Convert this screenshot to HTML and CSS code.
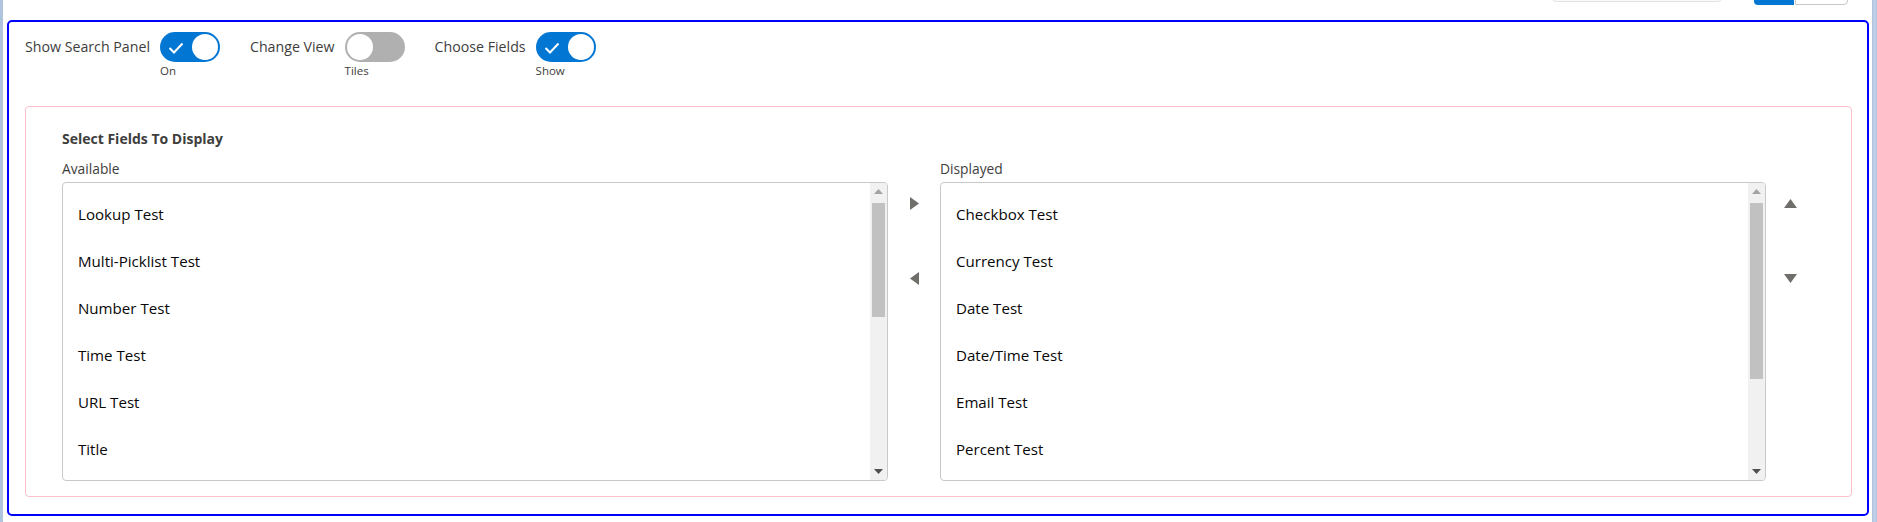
FILE: index.html
```html
<!DOCTYPE html>
<html lang="en">
<head>
<meta charset="utf-8">
<title>Field chooser</title>
<link rel="stylesheet" href="styles.css">
</head>
<body>
<div class="page">
  <div class="edge edge-left"></div>
  <div class="main">
    <div class="topbar">
      <div class="search-stub"></div>
      <div class="btn-group">
        <div class="btn btn-brand"></div>
        <div class="btn btn-neutral"></div>
      </div>
    </div>
    <div class="card">
      <div class="toggles">
        <div class="toggle-item">
          <span class="toggle-label">Show Search Panel</span>
          <div class="toggle-col">
            <span class="switch on">
              <svg class="check" width="16" height="12" viewBox="0 0 16 12"><polyline points="1.5,6 6,10.5 14.5,1.5" fill="none" stroke="#fff" stroke-width="2"/></svg>
              <span class="knob"></span>
            </span>
            <span class="status">On</span>
          </div>
        </div>
        <div class="toggle-item">
          <span class="toggle-label">Change View</span>
          <div class="toggle-col">
            <span class="switch off"><span class="knob"></span></span>
            <span class="status">Tiles</span>
          </div>
        </div>
        <div class="toggle-item">
          <span class="toggle-label">Choose Fields</span>
          <div class="toggle-col">
            <span class="switch on">
              <svg class="check" width="16" height="12" viewBox="0 0 16 12"><polyline points="1.5,6 6,10.5 14.5,1.5" fill="none" stroke="#fff" stroke-width="2"/></svg>
              <span class="knob"></span>
            </span>
            <span class="status">Show</span>
          </div>
        </div>
      </div>

      <div class="picker">
        <div class="picker-title">Select Fields To Display</div>
        <div class="picker-grid">
          <div class="col">
            <div class="col-label">Available</div>
            <div class="listbox">
              <ul class="options">
                <li>Lookup Test</li>
                <li>Multi-Picklist Test</li>
                <li>Number Test</li>
                <li>Time Test</li>
                <li>URL Test</li>
                <li>Title</li>
              </ul>
              <div class="scrollbar">
                <div class="sb-btn"><svg width="9" height="5" viewBox="0 0 9 5"><polygon points="0,5 4.5,0 9,5" fill="#a3a3a3"/></svg></div>
                <div class="sb-track"><div class="sb-thumb thumb-a"></div></div>
                <div class="sb-btn"><svg width="9" height="5" viewBox="0 0 9 5"><polygon points="0,0 9,0 4.5,5" fill="#505050"/></svg></div>
              </div>
            </div>
          </div>

          <div class="side-btns">
            <span class="icon-btn"><svg width="9" height="13" viewBox="0 0 9 13"><polygon points="0,0 9,6.5 0,13" fill="#706e6b"/></svg></span>
            <span class="icon-btn"><svg width="9" height="13" viewBox="0 0 9 13"><polygon points="9,0 0,6.5 9,13" fill="#706e6b"/></svg></span>
          </div>

          <div class="col">
            <div class="col-label">Displayed</div>
            <div class="listbox">
              <ul class="options">
                <li>Checkbox Test</li>
                <li>Currency Test</li>
                <li>Date Test</li>
                <li>Date/Time Test</li>
                <li>Email Test</li>
                <li>Percent Test</li>
              </ul>
              <div class="scrollbar">
                <div class="sb-btn"><svg width="9" height="5" viewBox="0 0 9 5"><polygon points="0,5 4.5,0 9,5" fill="#a3a3a3"/></svg></div>
                <div class="sb-track"><div class="sb-thumb thumb-d"></div></div>
                <div class="sb-btn"><svg width="9" height="5" viewBox="0 0 9 5"><polygon points="0,0 9,0 4.5,5" fill="#505050"/></svg></div>
              </div>
            </div>
          </div>

          <div class="side-btns">
            <span class="icon-btn"><svg width="13" height="9" viewBox="0 0 13 9"><polygon points="0,9 6.5,0 13,9" fill="#706e6b"/></svg></span>
            <span class="icon-btn"><svg width="13" height="9" viewBox="0 0 13 9"><polygon points="0,0 13,0 6.5,9" fill="#706e6b"/></svg></span>
          </div>
        </div>
      </div>
    </div>
  </div>
  <div class="edge edge-right"></div>
</div>
</body>
</html>
```

FILE: styles.css
```css
* { box-sizing: border-box; }

html, body {
  margin: 0;
  padding: 0;
  background: #ffffff;
}

body {
  font-family: "Open Sans", "Noto Sans", sans-serif;
  color: #3e3e3c;
}

.page {
  display: flex;
  width: 1877px;
  height: 522px;
  overflow: hidden;
}

.edge { background: #b0c4de; flex: none; }
.edge-left { width: 3px; }
.edge-right { width: 5px; background: linear-gradient(90deg, #a9bfda, #c3d3e8 50%, #aec3dd); }

.main {
  flex: 1;
  display: flex;
  flex-direction: column;
  min-width: 0;
}

/* clipped elements from a header above */
.topbar {
  height: 20px;
  flex: none;
  display: flex;
  justify-content: flex-end;
  align-items: flex-start;
  gap: 32px;
  padding-right: 24px;
  overflow: hidden;
}

.search-stub {
  width: 170px;
  height: 30px;
  margin-top: -28px;
  border: 1px solid #e3e3e3;
  border-radius: 4px;
  background: #fafafa;
}

.btn-group {
  display: flex;
  gap: 1px;
  margin-top: -27px;
}

.btn { height: 32px; }
.btn-brand {
  width: 40px;
  background: #0176d3;
  border-radius: 4px 0 0 4px;
}
.btn-neutral {
  width: 53px;
  background: #fff;
  border: 1px solid #c9c9c9;
  border-radius: 0 4px 4px 0;
}

/* blue card */
.card {
  margin: 0 3px 0 4px;
  height: 496px;
  border: 2px solid #0000ff;
  border-radius: 5px;
  padding: 10px 15px 0 16px;
  display: flex;
  flex-direction: column;
}

.toggles {
  display: flex;
  gap: 30px;
  align-items: flex-start;
}

.toggle-item {
  display: flex;
  align-items: flex-start;
  gap: 10px;
}

.toggle-label {
  font-size: 14.2px;
  line-height: 30px;
  color: #3e3e3c;
}

.toggle-col {
  display: flex;
  flex-direction: column;
  align-items: flex-start;
}

.switch {
  width: 60px;
  height: 30px;
  border-radius: 15px;
  display: flex;
  align-items: center;
  padding: 2px;
}

.switch.on {
  background: #0176d3;
  justify-content: space-between;
  padding-left: 8px;
}

.switch.off {
  background: #b0b0b0;
  justify-content: flex-start;
}

.check { display: block; margin-top: 1px; }

.knob {
  width: 26px;
  height: 26px;
  border-radius: 50%;
  background: #fff;
}

.status {
  font-size: 11.5px;
  line-height: 16px;
  margin-top: 1px;
  color: #3e3e3c;
}

/* pink picker */
.picker {
  margin-top: 27px;
  height: 391px;
  border: 1px solid #ffc0cb;
  border-radius: 4px;
  padding: 22px 37px 0 36px;
}

.picker-title {
  font-size: 14px;
  font-weight: 700;
  line-height: 20px;
  color: #3e3e3c;
  margin-bottom: 10px;
}

.picker-grid {
  display: grid;
  grid-template-columns: 1fr 52px 1fr 48px;
}

.col-label {
  font-size: 13.8px;
  line-height: 20px;
  margin-bottom: 3px;
  color: #3e3e3c;
}

.listbox {
  height: 299px;
  border: 1px solid #c9c9c9;
  border-radius: 4px;
  display: flex;
  overflow: hidden;
  background: #fff;
}

.options {
  list-style: none;
  margin: 0;
  padding: 8px 0 0 15px;
  flex: 1;
  overflow: hidden;
}

.options li {
  height: 47px;
  line-height: 47px;
  font-size: 15.1px;
  color: #080707;
  white-space: nowrap;
}

.scrollbar {
  width: 17px;
  flex: none;
  background: #f1f1f1;
  display: flex;
  flex-direction: column;
}

.sb-btn {
  height: 17px;
  flex: none;
  display: flex;
  align-items: center;
  justify-content: center;
}

.sb-btn svg { display: block; }

.sb-track {
  flex: 1;
  padding: 3px 2px 0;
}

.sb-thumb {
  background: #c1c1c1;
  width: 100%;
}

.thumb-a { height: 114px; }
.thumb-d { height: 176px; }

.side-btns {
  display: flex;
  flex-direction: column;
  align-items: center;
  padding-top: 28px;
  gap: 43px;
}

.icon-btn {
  width: 32px;
  height: 32px;
  display: flex;
  align-items: center;
  justify-content: center;
}

.icon-btn svg { display: block; }
```
